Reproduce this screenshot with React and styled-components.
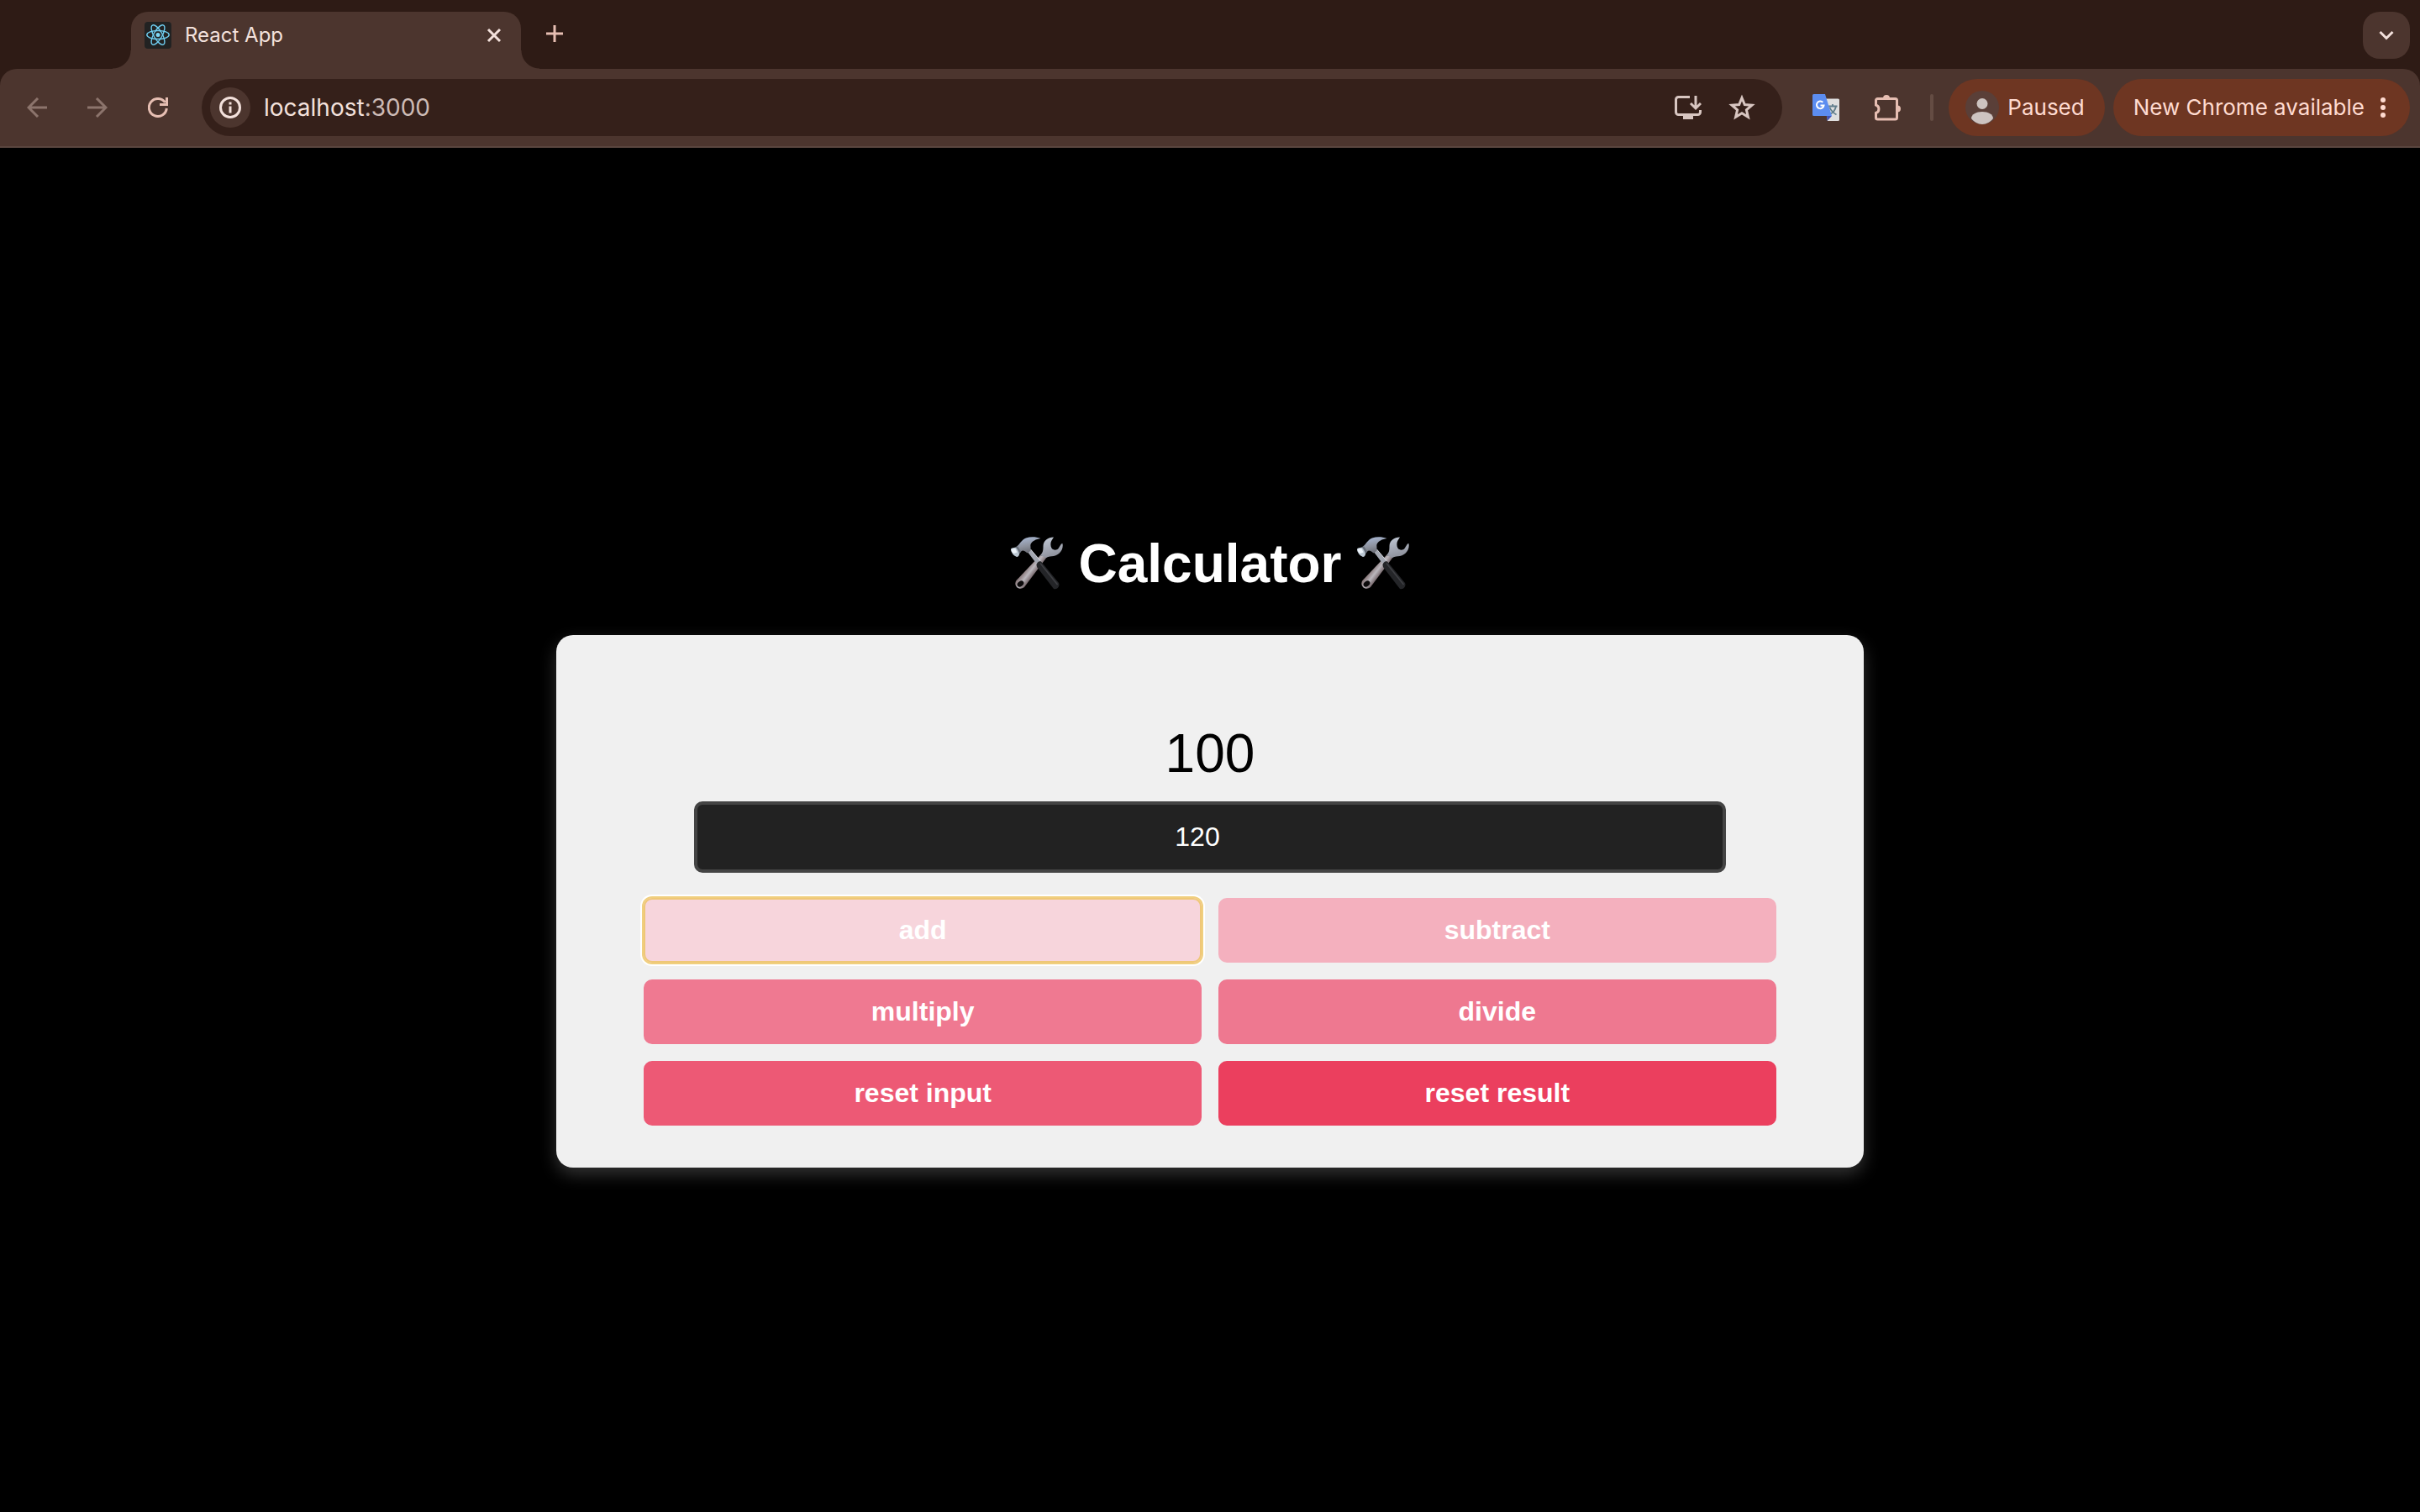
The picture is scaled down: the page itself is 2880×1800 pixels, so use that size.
import React, { useState } from "react";
import styled, { createGlobalStyle, css } from "styled-components";

const GlobalStyle = createGlobalStyle`
  *, *::before, *::after { box-sizing: border-box; }
  body { margin: 0; background: #000; font-family: "Liberation Sans", Arial, sans-serif; }
  button, input { font: inherit; }
`;

const Page = styled.div`
  min-height: 100vh;
  display: flex;
  flex-direction: column;
  background: #000;
`;

const Browser = styled.header`
  background: #2e1b15;
  font-family: Inter, Roboto, sans-serif;
`;

const TabStrip = styled.div`
  display: flex;
  align-items: flex-start;
  height: 82px;
  padding: 14px 12px 0 156px;
`;

const flare = css`
  content: "";
  position: absolute;
  bottom: 0;
  width: 22px;
  height: 22px;
`;

const Tab = styled.div`
  position: relative;
  display: flex;
  align-items: center;
  gap: 16px;
  width: 464px;
  height: 68px;
  padding: 0 16px 12px;
  border-radius: 20px 20px 0 0;
  background: #4c352e;
  color: #f3e1dc;
  font-size: 24px;
  line-height: 32px;
  &::before {
    ${flare}
    right: 100%;
    background: radial-gradient(circle at 0 0, transparent 21px, #4c352e 22px);
  }
  &::after {
    ${flare}
    left: 100%;
    background: radial-gradient(circle at 100% 0, transparent 21px, #4c352e 22px);
  }
`;

const TabTitle = styled.span`
  flex: 1;
`;

const IconButton = styled.button`
  display: flex;
  align-items: center;
  justify-content: center;
  width: ${(p) => p.$size || 32}px;
  height: ${(p) => p.$size || 32}px;
  padding: 0;
  border: 0;
  border-radius: ${(p) => (p.$round ? "50%" : "20px")};
  background: ${(p) => p.$fill || "transparent"};
  color: ${(p) => p.$color || "#e6beb2"};
  flex: none;
`;

const NewTab = styled(IconButton)`
  margin: 0 auto 0 14px;
`;

const Toolbar = styled.div`
  display: flex;
  align-items: center;
  height: 94px;
  padding: 0 12px 0 20px;
  border-bottom: 2px solid #5a463f;
  border-radius: 20px 20px 0 0;
  background: #4c352e;
`;

const NavButtons = styled.nav`
  display: flex;
  gap: 24px;
  margin-right: 28px;
`;

const AddressBar = styled.div`
  flex: 1;
  display: flex;
  align-items: center;
  height: 68px;
  padding: 0 28px 0 10px;
  border-radius: 34px;
  background: #35201a;
`;

const Address = styled.span`
  flex: 1;
  padding-left: 16px;
  color: #cdbbb6;
  font-size: 28px;
  line-height: 36px;
`;

const Host = styled.span`
  color: #f3e1dc;
`;

const AddressActions = styled.div`
  display: flex;
  gap: 24px;
`;

const Extensions = styled.div`
  display: flex;
  align-items: center;
  gap: 42px;
  padding: 0 34px 0 36px;
`;

const Divider = styled.span`
  width: 4px;
  height: 32px;
  margin-right: 18px;
  border-radius: 2px;
  background: #644c43;
`;

const Pills = styled.div`
  display: flex;
  gap: 10px;
`;

const Pill = styled.button`
  display: flex;
  align-items: center;
  gap: 10px;
  height: 68px;
  padding: ${(p) => (p.$menu ? "0 20px 0 24px" : "0 24px 0 20px")};
  border: 0;
  border-radius: 34px;
  background: #6e3622;
  color: #ffdbd0;
  font-size: 26px;
  line-height: 32px;
  white-space: nowrap;
`;

const Main = styled.main`
  flex: 1;
  display: flex;
  flex-direction: column;
  align-items: center;
  justify-content: center;
`;

const Title = styled.h1`
  display: flex;
  align-items: center;
  gap: 18px;
  margin: 44px 0;
  color: #fff;
  font-size: 64px;
  line-height: 82px;
`;

const Card = styled.form`
  width: 54%;
  padding: 104px 104px 50px;
  border-radius: 20px;
  background: #f0f0f0;
  box-shadow: 0 8px 20px rgba(255, 255, 255, 0.2);
`;

const Result = styled.output`
  display: block;
  color: #000;
  font-size: 64px;
  line-height: 74px;
  text-align: center;
`;

const Field = styled.label`
  display: block;
  margin: 20px 60px 30px;
`;

const NumberInput = styled.input`
  display: block;
  width: 100%;
  height: 85px;
  padding: 20px 50px 20px 20px;
  border: 4px solid #444;
  border-radius: 10px;
  outline: 0;
  background: #222;
  color: #fff;
  font-size: 32px;
  line-height: 37px;
  text-align: center;
`;

const Keys = styled.div`
  display: grid;
  grid-template-columns: 1fr 1fr;
  gap: 20px;
`;

const Key = styled.button`
  padding: 20px;
  border: 0;
  border-radius: 10px;
  background: ${(p) => p.$tone};
  color: #fff;
  font-size: 32px;
  font-weight: 700;
  line-height: 37px;
  ${(p) =>
    p.$focused &&
    css`
      box-shadow: inset 0 0 0 2px #efc777, 0 0 0 2px #f0cf7e, 0 0 0 4px #fff;
    `}
`;

const Line = ({ size = 24, width = 3, children }) => (
  <svg width={size} height={size} viewBox={`0 0 ${size} ${size}`} fill="none" stroke="currentColor" strokeWidth={width} aria-hidden="true">
    {children}
  </svg>
);

const ReactLogo = () => (
  <svg width="32" height="32" viewBox="0 0 32 32" aria-hidden="true">
    <rect width="32" height="32" rx="4" fill="#222" />
    <g fill="none" stroke="#6fcdf0" strokeWidth="1.4">
      <ellipse cx="16" cy="15.5" rx="13.2" ry="5" />
      <ellipse cx="16" cy="15.5" rx="13.2" ry="5" transform="rotate(60 16 15.5)" />
      <ellipse cx="16" cy="15.5" rx="13.2" ry="5" transform="rotate(120 16 15.5)" />
    </g>
    <circle cx="16" cy="15.5" r="2.5" fill="#7fd6f5" />
  </svg>
);

const TranslateIcon = () => (
  <svg width="32" height="32" viewBox="0 0 32 32" aria-hidden="true">
    <path d="M13 5.500h17.500a1.500 1.500 0 0 1 1.500 1.500V30.500a1.500 1.500 0 0 1-1.500 1.500H18z" fill="#dfdfdf" />
    <path d="M18.500 14.500h11M24 12v2.500M28 14.500c-1 5-4 8-7.500 9.500M20.500 16c1.500 3.500 4.500 6.500 8 8.500" fill="none" stroke="#607d8b" strokeWidth="1.800" />
    <path d="M17 26h6l-5.500 6z" fill="#3f51b5" />
    <path d="M1.500 0H15l8 26H1.500A1.500 1.500 0 0 1 0 24.500v-23A1.500 1.500 0 0 1 1.500 0z" fill="#5c8df0" />
    <path d="M12.300 9.800A4.300 4.300 0 1 0 13.500 13.500H9.500" fill="none" stroke="#fff" strokeWidth="2" />
  </svg>
);

const Avatar = () => (
  <svg width="40" height="40" viewBox="0 0 40 40" aria-hidden="true">
    <circle cx="20" cy="20" r="20" fill="#5a3f38" />
    <circle cx="20" cy="15.500" r="6.500" fill="#cdc3c0" />
    <path d="M7 33c0-5 6-8 13-8s13 3 13 8c-3 4-8 7-13 7s-10-3-13-7z" fill="#cdc3c0" />
  </svg>
);

const ToolsIcon = ({ id }) => (
  <svg width="64" height="64" viewBox="0 0 64 64" role="img" aria-label="hammer and wrench">
    <defs>
      <linearGradient id={`${id}-jaw`} x1="0" y1="0" x2="0.3" y2="1">
        <stop offset="0" stopColor="#c3cbd8" />
        <stop offset="1" stopColor="#8f929d" />
      </linearGradient>
      <linearGradient id={`${id}-head`} x1="0.3" y1="0" x2="0.6" y2="1">
        <stop offset="0" stopColor="#a9b8d4" />
        <stop offset="0.5" stopColor="#8d929e" />
        <stop offset="1" stopColor="#5f6067" />
      </linearGradient>
      <linearGradient id={`${id}-shaft`} gradientUnits="userSpaceOnUse" x1="21" y1="36" x2="30" y2="43">
        <stop offset="0" stopColor="#8a7a7c" />
        <stop offset="0.5" stopColor="#bbb7bd" />
        <stop offset="1" stopColor="#77696d" />
      </linearGradient>
    </defs>
    <path d="M36 22L7.500 52c-4 6 3 13 9.500 8L44 24z" fill={`url(#${id}-shaft)`} />
    <ellipse cx="12.500" cy="56" rx="4.200" ry="3" fill="#0c0a0b" transform="rotate(-35 12.500 56)" />
    <path d="M52 0.500C45 0.500 39.500 5 39.500 11c0 4 0 8-3.500 11l7 3c3-2 6-1.500 9-2C59 21.500 64 15 62.500 8L61 8.500 57.500 14c-2 2.500-6.500 2-8-0.500C48 11 48 7 49.500 4.500z" fill={`url(#${id}-jaw)`} />
    <path d="M20.500 17.500L24.500 15 36 28.500 31.500 32z" fill="#a3a7b1" />
    <path d="M24.500 15L36 28.500" stroke="#d8dbe2" strokeWidth="1" />
    <path d="M31.500 33.500c0.500-3 3-5 5.500-4L58 55c2 4-2.500 8.500-6 7L32 36z" fill="#242528" />
    <path d="M36 31.500L56.500 57" stroke="#3e3f43" strokeWidth="1.600" fill="none" />
    <path d="M7.500 12C12 9 13 4 19 1.500 25-0.500 31 0 36.500 2 30.500 3 26.500 5 24.500 9c-0.500 3 0.500 5 0 7.500L21 19.500c-2-0.500-3-3-5.500-3-2 0-3 2-5 4.500z" fill={`url(#${id}-head)`} />
    <path d="M4 14l5-3 4 6.500-3.500 5.500z" fill="#666d78" />
    <path d="M1 14.500c1-1 4-2 6-1.500 2 2 3.500 5 4 8-0.500 2-1.500 3-3 3C4 22.500 1 18.500 1 14.500z" fill="#bcc8d3" />
    <path d="M1.500 15c1.500-0.500 3.500-1 5-0.500l2 4-4 1.500c-1.500-1-3-3-3-5z" fill="#eef4fa" />
  </svg>
);

const keys = [
  { label: "add", tone: "#f7d5dc", focused: true, run: (r, n) => r + n },
  { label: "subtract", tone: "#f4b0be", run: (r, n) => r - n },
  { label: "multiply", tone: "#ef7991", run: (r, n) => r * n },
  { label: "divide", tone: "#ee7890", run: (r, n) => r / n },
  { label: "reset input", tone: "#ed5975" },
  { label: "reset result", tone: "#eb3f5e" },
];

export default function App() {
  const [result, setResult] = useState(100);
  const [value, setValue] = useState("120");

  const press = (key) => {
    if (key.run) setResult(key.run(result, Number(value)));
    else if (key.label === "reset input") setValue("");
    else setResult(0);
  };

  return (
    <Page>
      <GlobalStyle />
      <Browser>
        <TabStrip>
          <Tab>
            <ReactLogo />
            <TabTitle>React App</TabTitle>
            <IconButton $color="#f3e1dc" aria-label="Close tab">
              <Line><path d="M5 5l14 14M19 5l-14 14" /></Line>
            </IconButton>
          </Tab>
          <NewTab $size={52} aria-label="New tab">
            <Line><path d="M12 2v20M2 12h20" /></Line>
          </NewTab>
          <IconButton $size={56} $fill="#4c352e" $color="#f3e1dc" aria-label="Search tabs">
            <Line><path d="M4.500 8l7.500 7.500L19.500 8" /></Line>
          </IconButton>
        </TabStrip>
        <Toolbar>
          <NavButtons>
            <IconButton $size={48} $color="#8c746c" aria-label="Back">
              <Line><path d="M24 12H2M13 1L2 12l11 11" /></Line>
            </IconButton>
            <IconButton $size={48} $color="#8c746c" aria-label="Forward">
              <Line><path d="M0 12h22M11 1l11 11-11 11" /></Line>
            </IconButton>
            <IconButton $size={48} aria-label="Reload">
              <Line>
                <path d="M22.300 13A10.500 10.500 0 1 1 20.500 6" />
                <path d="M22.500 0v8.500H14" />
              </Line>
            </IconButton>
          </NavButtons>
          <AddressBar>
            <IconButton $size={48} $round $fill="#4c352e" $color="#f3e1dc" aria-label="Site information">
              <Line size={26}>
                <circle cx="13" cy="13" r="11.500" />
                <path d="M13 11.500v8M13 6.500v3" />
              </Line>
            </IconButton>
            <Address><Host>localhost</Host>:3000</Address>
            <AddressActions>
              <IconButton $size={40} $color="#d8c6c1" aria-label="Install app">
                <Line size={32}>
                  <path d="M18 3.500H4.500a3 3 0 0 0-3 3v15a3 3 0 0 0 3 3h23a3 3 0 0 0 3-3V19" />
                  <path d="M25 2v14M19 11l6 6 6-6" />
                  <path d="M10 27.500h12" strokeWidth="5" />
                </Line>
              </IconButton>
              <IconButton $size={40} $color="#d8c6c1" aria-label="Bookmark">
                <Line size={32}>
                  <path d="M16 4.500l3.300 8 8.700.700-6.600 5.700 2 8.400L16 22.800l-7.400 4.500 2-8.400L4 13.200l8.700-.700z" />
                </Line>
              </IconButton>
            </AddressActions>
          </AddressBar>
          <Extensions>
            <IconButton aria-label="Translate"><TranslateIcon /></IconButton>
            <IconButton aria-label="Extensions">
              <Line size={32}>
                <path d="M3.500 5.500h21a2 2 0 0 1 2 2V28a2 2 0 0 1-2 2h-21a2 2 0 0 1-2-2v-5.500a5 5 0 0 0 0-9.500V7.500a2 2 0 0 1 2-2z" />
                <path d="M10 5a4 4 0 0 1 8 0zM27 13.500a4 4 0 0 1 0 8z" fill="currentColor" stroke="none" />
              </Line>
            </IconButton>
          </Extensions>
          <Divider />
          <Pills>
            <Pill><Avatar />Paused</Pill>
            <Pill $menu>
              New Chrome available
              <Line size={24}>
                <g fill="currentColor" stroke="none">
                  <circle cx="12" cy="3" r="3" /><circle cx="12" cy="12" r="3" /><circle cx="12" cy="21" r="3" />
                </g>
              </Line>
            </Pill>
          </Pills>
        </Toolbar>
      </Browser>
      <Main>
        <Title>
          <ToolsIcon id="left" />
          Calculator
          <ToolsIcon id="right" />
        </Title>
        <Card onSubmit={(e) => e.preventDefault()}>
          <Result>{result}</Result>
          <Field>
            <NumberInput
              inputMode="numeric"
              aria-label="Number"
              value={value}
              onChange={(e) => setValue(e.target.value)}
            />
          </Field>
          <Keys>
            {keys.map((key) => (
              <Key key={key.label} type="button" $tone={key.tone} $focused={key.focused} onClick={() => press(key)}>
                {key.label}
              </Key>
            ))}
          </Keys>
        </Card>
      </Main>
    </Page>
  );
}
